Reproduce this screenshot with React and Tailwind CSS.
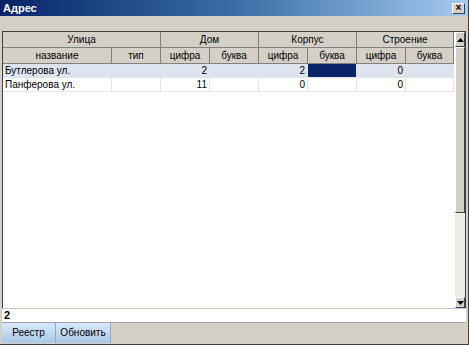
import React from "react";

const cols = [109, 49, 49, 49, 49, 49, 49, 48];
const sub = ["название", "тип", "цифра", "буква", "цифра", "буква", "цифра", "буква"];
const groups = [
  ["Улица", 158],
  ["Дом", 98],
  ["Корпус", 98],
  ["Строение", 97],
];
const rows = [
  { sel: true, cells: ["Бутлерова ул.", "", "2", "", "2", "", "0", ""] },
  { sel: false, cells: ["Панферова ул.", "", "11", "", "0", "", "0", ""] },
];

function Arrow({ down }) {
  return (
    <svg width="7" height="4" viewBox="0 0 7 4">
      {down ? <polygon points="0,0 7,0 3.5,4" fill="#000" /> : <polygon points="0,4 7,4 3.5,0" fill="#000" />}
    </svg>
  );
}

export default function App() {
  return (
    <div
      className="w-[469px] h-[345px] bg-[#d4d0c8] flex flex-col overflow-hidden border-r border-b border-[#404040]"
      style={{ fontFamily: '"Liberation Sans", Arial, sans-serif' }}
    >
      <div className="h-[16px] flex items-center justify-between bg-gradient-to-r from-[#0a246a] via-[#3a6ea5] to-[#a6caf0] pl-[3px] pr-[3px] shrink-0">
        <span className="text-white font-bold text-[11px] leading-none">Адрес</span>
        <div className="w-[13px] h-[11px] bg-[#d4d0c8] border border-t-white border-l-white border-r-[#404040] border-b-[#404040] flex items-center justify-center text-[10px] font-bold leading-none text-black">
          ×
        </div>
      </div>
      <div className="h-[15px] shrink-0" />
      <div className="ml-[2px] mr-[2px] h-[277px] flex bg-white border-l border-t border-[#404040] shrink-0">
        <div className="w-[451px] flex flex-col">
          <div className="flex h-[16px]">
            {groups.map(([g, w]) => (
              <div
                key={g}
                style={{ width: w }}
                className="shrink-0 bg-[#d4d0c8] border-r border-b border-[#808080] text-[10px] text-black flex items-center justify-center leading-none"
              >
                {g}
              </div>
            ))}
          </div>
          <div className="flex h-[16px]">
            {sub.map((s, i) => (
              <div
                key={i}
                style={{ width: cols[i] }}
                className="shrink-0 bg-[#d4d0c8] border-r border-b border-[#808080] text-[10px] text-black flex items-center justify-center leading-none"
              >
                {s}
              </div>
            ))}
          </div>
          {rows.map((r, ri) => (
            <div key={ri} className="flex h-[14px]">
              {r.cells.map((c, i) => {
                const selCell = r.sel && i === 3 && false;
                const dark = r.sel && i === 5;
                return (
                  <div
                    key={i}
                    style={{ width: cols[i] }}
                    className={
                      "shrink-0 border-r border-b border-[#e4e4e4] text-[10px] text-black flex items-center leading-none px-[2px] " +
                      (i === 0 ? "justify-start " : "justify-end ") +
                      (dark ? "bg-[#0a246a] " : r.sel ? "bg-[#dde3ef] " : "bg-white ") +
                      (selCell ? "" : "")
                    }
                  >
                    {c}
                  </div>
                );
              })}
            </div>
          ))}
        </div>
        <div className="w-[12px] ml-[1px] flex flex-col bg-[#eeebe6]">
          <div className="h-[15px] bg-[#d4d0c8] border border-t-white border-l-white border-r-[#404040] border-b-[#404040] flex items-center justify-center">
            <Arrow />
          </div>
          <div className="h-[166px] bg-[#d4d0c8] border border-t-white border-l-white border-r-[#404040] border-b-[#404040]" />
          <div className="flex-1" />
          <div className="h-[11px] bg-[#d4d0c8] border border-t-white border-l-white border-r-[#404040] border-b-[#404040] flex items-center justify-center">
            <Arrow down />
          </div>
        </div>
        <div className="w-[1px] bg-[#404040]" />
      </div>
      <div className="ml-[2px] mr-[2px] h-[15px] bg-white border-t border-[#c4c4e0] border-b border-b-[#a0a0c0] flex items-center px-[2px] shrink-0">
        <span className="text-[11px] font-bold text-black leading-none">2</span>
      </div>
      <div className="ml-[2px] flex h-[20px] shrink-0">
        <div className="w-[54px] bg-gradient-to-b from-[#d8e8f8] to-[#a8c8e8] border-r border-[#8ca8c8] flex items-center justify-center text-[10px] text-black leading-none">
          Реестр
        </div>
        <div className="w-[55px] bg-gradient-to-b from-[#d8e8f8] to-[#a8c8e8] border-r border-[#8ca8c8] flex items-center justify-center text-[10px] text-black leading-none">
          Обновить
        </div>
      </div>
    </div>
  );
}
